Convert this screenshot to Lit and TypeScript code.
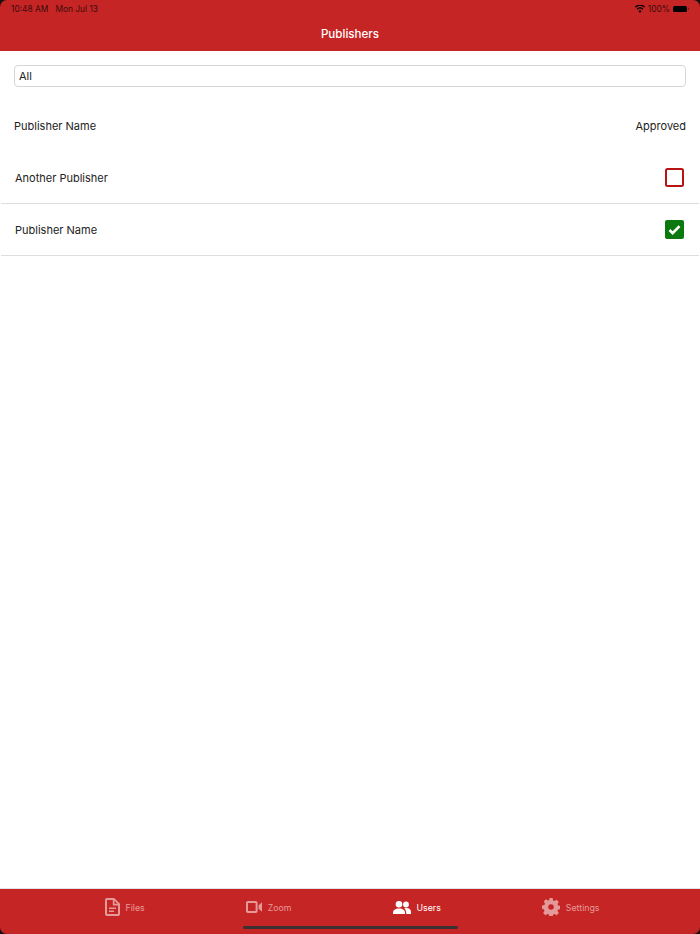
import { LitElement, html, css, svg } from "lit";
import { customElement, state } from "lit/decorators.js";

const tabIcons: Record<string, { w: number; h: number; body: unknown }> = {
  files: {
    w: 15,
    h: 18,
    body: svg`<path fill-rule="evenodd" d="M2 0h7.200L15 5.800V16a2 2 0 0 1-2 2H2a2 2 0 0 1-2-2V2a2 2 0 0 1 2-2Zm0 2v14h11V7.500H7.800V2H2Zm7.500.8v3h3l-3-3ZM4 9.400h7V11H4V9.400Zm0 3h5V14H4v-1.600Z"/>`,
  },
  zoom: {
    w: 16,
    h: 12,
    body: svg`<path fill-rule="evenodd" d="M1.800 0h8A1.800 1.800 0 0 1 11.600 1.800v8.400A1.800 1.800 0 0 1 9.800 12h-8A1.800 1.800 0 0 1 0 10.200V1.800A1.800 1.800 0 0 1 1.800 0Zm.2 2v8h7.600V2H2Zm10.600 2.300L16 1.300v9.400l-3.400-3V4.300Z"/>`,
  },
  users: {
    w: 18,
    h: 13,
    body: svg`<circle cx="6" cy="3.300" r="3.300"/><circle cx="13" cy="3.500" r="2.900"/><path d="M0 12c0-3 2.200-4.600 6-4.600s6 1.600 6 4.600v1H0v-1Z"/><path d="M11.300 7.200c.6-.2 1.200-.2 1.900-.2 3 0 4.800 1.600 4.800 4v2h-4.700c0-2.500-.6-4.500-2-5.800Z"/>`,
  },
  settings: {
    w: 18,
    h: 18,
    body: svg`<path fill-rule="evenodd" d="M7.400 0h3.200l.5 2.400 1.500.6 2-1.300 2.200 2.200-1.300 2 .6 1.500 2.400.5v3.200l-2.400.5-.6 1.500 1.300 2-2.200 2.200-2-1.300-1.500.6-.5 2.400H7.400l-.5-2.400-1.500-.6-2 1.300-2.200-2.200 1.300-2-.6-1.500L0 10.600V7.400l2.400-.5.6-1.500-1.300-2 2.200-2.200 2 1.300 1.500-.6L7.400 0ZM9 6.200a2.800 2.800 0 1 0 0 5.600 2.800 2.800 0 0 0 0-5.600Z"/>`,
  },
};

@customElement("app-root")
export class AppRoot extends LitElement {
  static styles = css`
    :host {
      display: block;
      font-family: "Inter", "Liberation Sans", sans-serif;
      color: #222;
    }
    .page {
      height: 934px;
      display: flex;
      flex-direction: column;
      background: #1a1010;
      overflow: hidden;
    }
    .top {
      height: 51px;
      flex: none;
      background: #c62525;
      border-radius: 7px 7px 0 0;
      box-sizing: border-box;
      padding: 4px 11px 0;
    }
    .status {
      display: flex;
      justify-content: space-between;
      align-items: center;
      height: 10px;
      font-size: 8.400px;
      color: #3a0c0c;
    }
    .status .left {
      display: flex;
      gap: 7px;
    }
    .status .right {
      display: flex;
      align-items: center;
      gap: 3px;
    }
    .battery {
      position: relative;
      width: 14px;
      height: 6px;
      background: #000;
      border-radius: 1.500px;
      margin-right: 2px;
    }
    .battery::after {
      content: "";
      position: absolute;
      right: -1.500px;
      top: 2px;
      width: 1px;
      height: 2px;
      background: #7a1616;
    }
    .title {
      margin-top: 13px;
      text-align: center;
      color: #fff;
      font-size: 11.600px;
      font-weight: 500;
      line-height: 14px;
    }
    .content {
      flex: 1;
      display: flex;
      flex-direction: column;
      background: #fff;
    }
    .filter {
      margin: 14px 14px 0;
      height: 22px;
      box-sizing: border-box;
      border: 1px solid #d6d6d6;
      border-radius: 4px;
      padding: 0 4px;
      display: flex;
      align-items: center;
      font-size: 11px;
    }
    .head {
      display: flex;
      justify-content: space-between;
      align-items: center;
      box-sizing: border-box;
      height: 65px;
      padding: 13px 14px 0;
      font-size: 11px;
    }
    .row {
      height: 52px;
      box-sizing: border-box;
      margin: 0 1px;
      padding: 0 14px;
      display: flex;
      justify-content: space-between;
      align-items: center;
      border-bottom: 1px solid #dedede;
      font-size: 11px;
    }
    .check {
      width: 19px;
      height: 19px;
      display: block;
      margin-right: 1px;
    }
    .tabs {
      height: 46px;
      flex: none;
      box-sizing: border-box;
      background: #c62525;
      border-top: 1px solid #e3e3e3;
      border-radius: 0 0 7px 7px;
      position: relative;
      display: flex;
      justify-content: center;
      gap: 101px;
      padding: 8px 0 0 4px;
    }
    .tab {
      display: flex;
      align-items: center;
      gap: 6px;
      height: 20px;
      color: #e59a9a;
      font-size: 8.800px;
    }
    .tab.active {
      color: #fff;
    }
    .tab svg {
      fill: currentColor;
      display: block;
    }
    .home {
      position: absolute;
      left: 243px;
      bottom: 5px;
      width: 215px;
      height: 3px;
      border-radius: 2px;
      background: #3a3232;
    }
  `;

  @state()
  private declare publishers: Array<{ name: string; approved: boolean }>;

  constructor() {
    super();
    this.publishers = [
      { name: "Another Publisher", approved: false },
      { name: "Publisher Name", approved: true },
    ];
  }

  private renderCheck(on: boolean) {
    return on
      ? html`<svg class="check" viewBox="0 0 19 19">
          <rect width="19" height="19" rx="2" fill="#0a7a10" />
          <path d="M4.500 10l3.200 3.200 6.800-7" fill="none" stroke="#fff" stroke-width="2.600" />
        </svg>`
      : html`<svg class="check" viewBox="0 0 19 19">
          <rect x="1" y="1" width="17" height="17" rx="1.500" fill="#fff" stroke="#b81414" stroke-width="2" />
        </svg>`;
  }

  render() {
    const tabs = [
      { id: "files", label: "Files" },
      { id: "zoom", label: "Zoom" },
      { id: "users", label: "Users", active: true },
      { id: "settings", label: "Settings" },
    ];
    return html`
      <div class="page">
        <div class="top">
          <div class="status">
            <div class="left"><span>10:48 AM</span><span>Mon Jul 13</span></div>
            <div class="right">
              <svg width="10" height="8" viewBox="0 0 22 16" preserveAspectRatio="none">
                <path d="M11 16l-3.500-4a5 5 0 0 1 7 0L11 16ZM5.500 9.500l-2-2.200a11 11 0 0 1 15 0l-2 2.200a8 8 0 0 0-11 0ZM1.800 5.300L0 3.200a16 16 0 0 1 22 0l-1.800 2.100a13.500 13.500 0 0 0-18.400 0Z" fill="#000" />
              </svg>
              <span>100%</span>
              <div class="battery"></div>
            </div>
          </div>
          <div class="title">Publishers</div>
        </div>
        <div class="content">
          <div class="filter">All</div>
          <div class="head"><span>Publisher Name</span><span>Approved</span></div>
          ${this.publishers.map(
            (p) => html`<div class="row"><span>${p.name}</span>${this.renderCheck(p.approved)}</div>`
          )}
        </div>
        <div class="tabs">
          ${tabs.map((t) => {
            const icon = tabIcons[t.id];
            return html`<div class="tab ${t.active ? "active" : ""}">
              <svg width=${icon.w} height=${icon.h} viewBox="0 0 ${icon.w} ${icon.h}">${icon.body}</svg>
              <span>${t.label}</span>
            </div>`;
          })}
          <div class="home"></div>
        </div>
      </div>
    `;
  }
}

declare global {
  interface HTMLElementTagNameMap {
    "app-root": AppRoot;
  }
}
